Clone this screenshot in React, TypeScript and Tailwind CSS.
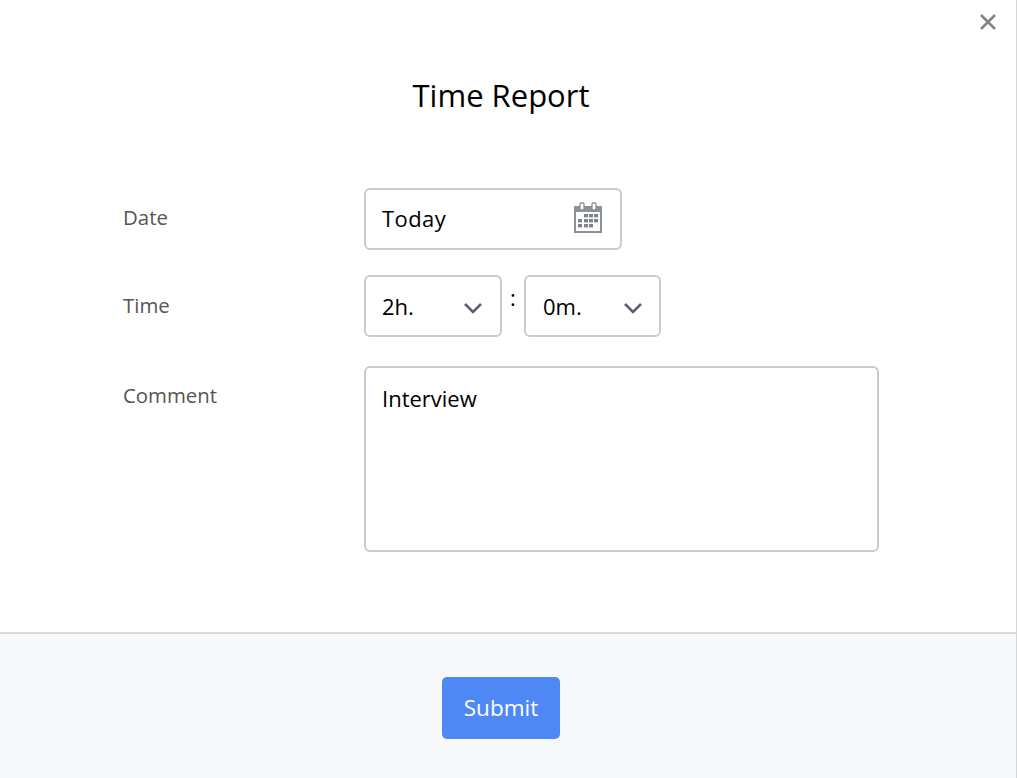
import React from "react";

function Chevron() {
  return (
    <svg width="20" height="12" viewBox="0 0 20 12" fill="none" stroke="#5b6270" strokeWidth="2.6" className="mt-[4px] shrink-0">
      <path d="M2 2l8 8 8-8" />
    </svg>
  );
}

function Calendar() {
  return (
    <svg width="30" height="31" viewBox="0 0 30 31" className="mb-[3px] shrink-0">
      <path d="M1 4h28v27H1z" fill="#8b9196" />
      <rect x="3" y="10" width="24" height="19" fill="#ffffff" />
      <rect x="7" y="1" width="4" height="7" rx="1" fill="#ffffff" stroke="#8b9196" strokeWidth="1.3" />
      <rect x="19" y="1" width="4" height="7" rx="1" fill="#ffffff" stroke="#8b9196" strokeWidth="1.3" />
      {[
        [11, 12], [16, 12], [21, 12],
        [5, 17], [11, 17], [16, 17], [21, 17],
        [5, 22], [11, 22], [16, 22],
      ].map(([x, y]) => (
        <rect key={`${x}-${y}`} x={x} y={y} width="4" height="3.4" fill="#7d8388" />
      ))}
    </svg>
  );
}

export default function App() {
  return (
    <div className="flex h-[778px] w-[1017px] flex-col overflow-hidden border-r border-[#d5d6d8] bg-white font-['Open_Sans',sans-serif]">
      <div className="relative flex h-[632px] flex-col">
        <button className="absolute right-[19px] top-[13px]" aria-label="Close">
          <svg width="18" height="18" viewBox="0 0 18 18" stroke="#7f8589" strokeWidth="2.6" fill="none">
            <path d="M2 2l14 14M16 2L2 16" />
          </svg>
        </button>
        <h1 className="mt-[72px] pr-[14px] text-center text-[31px] leading-[46px] text-black">Time Report</h1>

        <div className="mt-[70px] flex flex-col pl-[123px]">
          <div className="flex h-[62px] items-center">
            <label className="mb-[4px] w-[241px] text-[20.4px] text-[#555555]">Date</label>
            <div className="flex h-[62px] w-[258px] items-center justify-between rounded-[6px] border-2 border-[#c9cbcd] pl-[16px] pr-[17px]">
              <span className="mb-[2px] text-[22px] tracking-[0.4px] text-black [font-kerning:none]">Today</span>
              <Calendar />
            </div>
          </div>

          <div className="mt-[25px] flex h-[62px] items-center">
            <label className="mb-[2px] w-[241px] text-[20.4px] text-[#555555]">Time</label>
            <div className="flex h-[62px] w-[138px] items-center justify-between rounded-[6px] border-2 border-[#c9cbcd] bg-white pl-[16px] pr-[17px]">
              <span className="text-[22px] text-black">2h.</span>
              <Chevron />
            </div>
            <span className="flex w-[22px] justify-center self-start pt-[7px] text-[22px] leading-[30px] text-black">:</span>
            <div className="flex h-[62px] w-[137px] items-center justify-between rounded-[6px] border-2 border-[#c9cbcd] bg-white pl-[17px] pr-[16px]">
              <span className="text-[22px] text-black">0m.</span>
              <Chevron />
            </div>
          </div>

          <div className="mt-[29px] flex">
            <label className="w-[241px] pt-[14px] text-[20.4px] leading-[30px] text-[#555555]">Comment</label>
            <div className="h-[186px] w-[515px] rounded-[6px] border-2 border-[#c9cbcd] px-[16px] pt-[13px] text-[22px] leading-[34px] text-black">
              Interview
            </div>
          </div>
        </div>
      </div>

      <div className="flex flex-1 items-center justify-center border-t-2 border-[#d9dadc] bg-[#f6f8fa] pr-[14px] pt-[3px]">
        <button className="flex h-[62px] w-[118px] items-center justify-center rounded-[5px] bg-[#4e88f5] text-[22.5px] text-white">
          Submit
        </button>
      </div>
    </div>
  );
}
